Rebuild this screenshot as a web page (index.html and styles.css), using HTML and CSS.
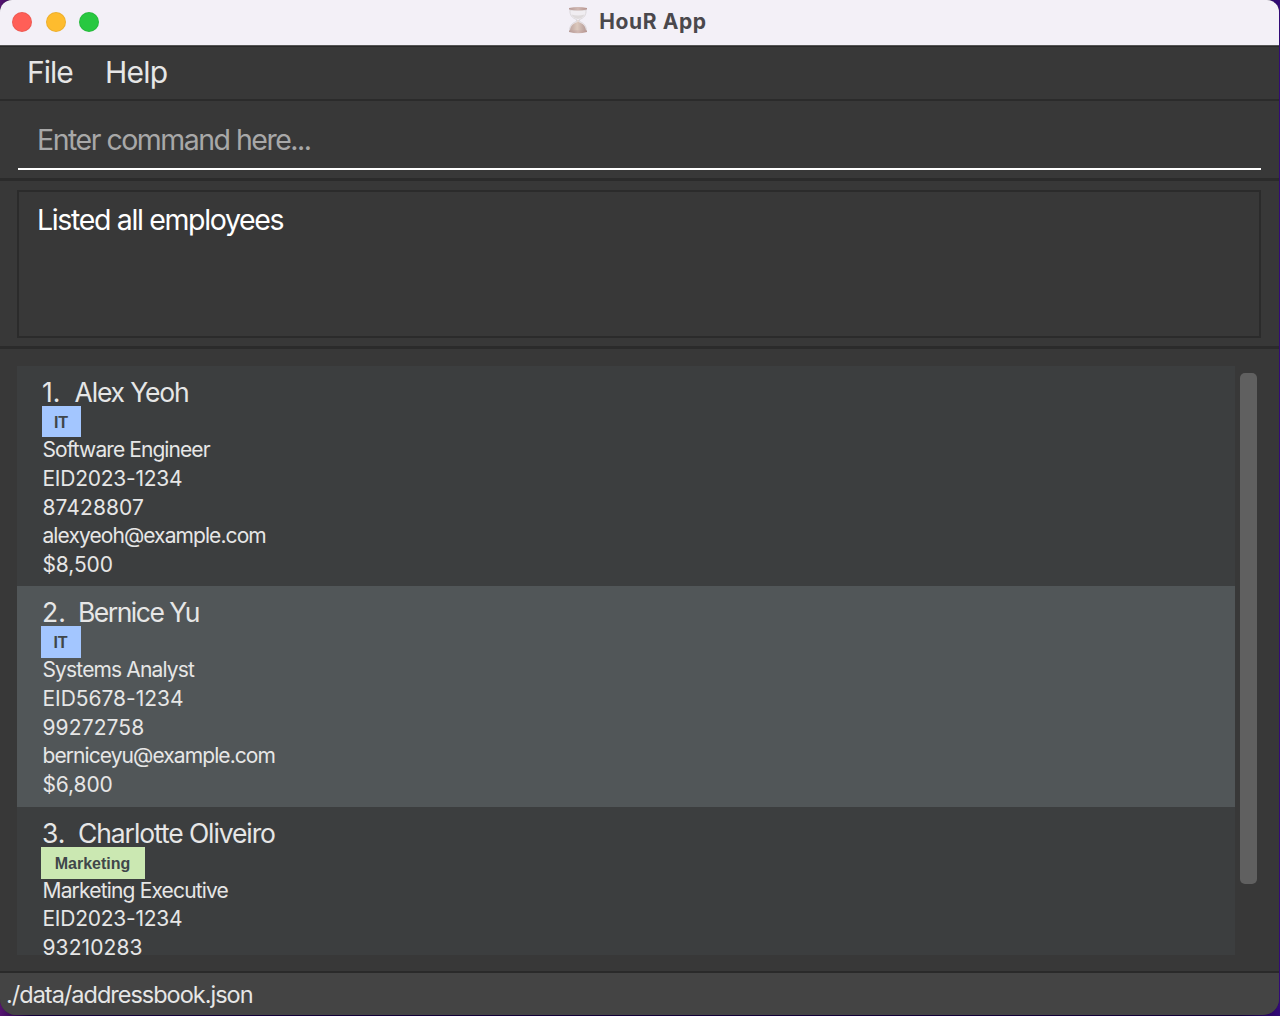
FILE: index.html
```html
<!DOCTYPE html>
<html lang="en">
<head>
<meta charset="utf-8">
<title>HouR App</title>
<link rel="stylesheet" href="styles.css">
</head>
<body>
<div class="window">
  <header class="titlebar">
    <div class="lights"><i class="light red"></i><i class="light yellow"></i><i class="light green"></i></div>
    <div class="title">
      <svg class="hourglass" width="20" height="28" viewBox="0 0 20 28">
        <defs>
          <linearGradient id="cap" x1="0" x2="1"><stop offset="0" stop-color="#b79a96"/><stop offset=".5" stop-color="#d0b8b2"/><stop offset="1" stop-color="#b6948f"/></linearGradient>
          <linearGradient id="sand" x1="0" x2="1"><stop offset="0" stop-color="#bfa6a1"/><stop offset=".45" stop-color="#dcc9bd"/><stop offset="1" stop-color="#b59c99"/></linearGradient>
        </defs>
        <path d="M2 4C1.500 9 4 12 8.500 13.500V15.500C4 17 1.500 20 1.500 25H18.500C18.500 20 16 17 11.500 15.500V13.500C16 12 18.500 9 18 4Z" fill="#f0edf1" stroke="#d6d2d6" stroke-width=".8"/>
        <path d="M3.500 8.500C5 11.500 7.500 12.500 10 13C12.500 12.500 15 11.500 16.500 8.500Q10 10.500 3.500 8.500Z" fill="#dedadb"/>
        <path d="M9.500 14H10.500V16C14.500 17 18 20 18 25H2C2 20 5.500 17 9.500 16Z" fill="url(#sand)"/>
        <path d="M1 2Q10 -.2 19 2V3.500Q10 5.500 1 3.500Z" fill="url(#cap)"/>
        <path d="M1 24.500Q10 24 19 24.500V26Q10 28.500 1 26Z" fill="url(#cap)"/>
      </svg>
      <span>HouR App</span>
    </div>
  </header>
  <nav class="menu"><span class="file">File</span><span class="help">Help</span></nav>
  <section class="command"><div class="field">Enter command here...</div></section>
  <section class="result"><div class="display">Listed all employees</div></section>
  <main class="people">
    <div class="list">
      <article class="person">
        <h2><span class="idx one">1.</span><span class="n1">Alex Yeoh</span></h2>
        <b class="tag it">IT</b>
        <p class="d1">Software Engineer</p><p class="eid">EID2023-1234</p><p class="num">87428807</p><p class="mail">alexyeoh@example.com</p><p class="pay">$8,500</p>
      </article>
      <article class="person alt">
        <h2><span class="idx">2.</span><span class="n2">Bernice Yu</span></h2>
        <b class="tag it wide">IT</b>
        <p class="d2">Systems Analyst</p><p class="eid eid2">EID5678-1234</p><p class="num">99272758</p><p class="mail">berniceyu@example.com</p><p class="pay">$6,800</p>
      </article>
      <article class="person last">
        <h2><span class="idx">3.</span><span class="n3">Charlotte Oliveiro</span></h2>
        <b class="tag marketing">Marketing</b>
        <p class="d3">Marketing Executive</p><p class="eid">EID2023-1234</p><p class="num">93210283</p>
      </article>
    </div>
    <div class="scroll"><div class="thumb"></div></div>
  </main>
  <footer class="status"><span>./data/addressbook.json</span></footer>
</div>
</body>
</html>
```
FILE: styles.css
```css
* { box-sizing: border-box; }
body {
  margin: 0; width: 1280px; height: 1016px; overflow: hidden;
  background: linear-gradient(90deg, #551470 0, #120038 30px, #120038 1240px, #330a78 1280px);
  font-family: Inter, "Liberation Sans", sans-serif; color: #e6e6e6;
}
.window {
  width: 1279px; height: 1015px; border-radius: 12px 12px 16px 16px; overflow: hidden;
  display: flex; flex-direction: column; background: #383838;
}
.titlebar {
  height: 46px; flex: none; background: #f3f0f7; border-bottom: 1px solid #555;
  display: grid; grid-template-columns: 1fr auto 1fr; align-items: center; padding: 0 16px 2px 12px;
}
.lights { display: flex; gap: 13.500px; }
.light { width: 20px; height: 20px; border-radius: 50%; border: 1px solid #0001; }
.red { background: #ff5f57; }
.yellow { background: #febc2e; }
.green { background: #28c840; }
.title { display: flex; align-items: center; gap: 11px; color: #4a484c; font-size: 21px; font-weight: 700; line-height: 28px; letter-spacing: .6px; }
.hourglass { margin-bottom: 3px; }
.menu { height: 55px; flex: none; border-top: 1px solid #292929; border-bottom: 2px solid #2b2b2b; padding: 0 27px 2px; display: flex; align-items: center; font-size: 30px; }
.file { width: 78px; letter-spacing: -1px; }
.help { letter-spacing: -.8px; }
.command { height: 80px; flex: none; padding: 9px 18px; border-bottom: 3px solid #2b2b2b; }
.field { height: 60px; border-bottom: 2px solid #fff; padding: 0 19px; font-size: 28.5px; line-height: 60px; letter-spacing: -1.5px; color: #a8a8a8; }
.result { height: 168px; flex: none; padding: 9px 18px 9px 17px; border-bottom: 3px solid #2b2b2b; }
.display { height: 148px; border: 2px solid #2b2b2b; padding: 9px 18px; font-size: 28.5px; line-height: 38px; letter-spacing: -1.35px; color: #fff; }
.people { height: 622px; flex: none; display: flex; padding: 17px 0 16px 17px; }
.list { width: 1218.400px; height: 589px; overflow: hidden; background: #3c3e3f; }
.person { height: 220.300px; padding: 9px 25px; background: #3c3e3f; }
.person.alt { background: #515658; }
.person.last { height: auto; padding-bottom: 0; }
h2 { margin: 0; height: 31px; font-size: 26.500px; line-height: 34px; font-weight: 400; display: flex; white-space: pre; }
.idx { width: 36px; }
.idx.one { width: 32.500px; }
.n1 { letter-spacing: -1.15px; }
.n2 { letter-spacing: -1.5px; }
.n3 { letter-spacing: -1.1px; }
.tag { display: flex; align-items: center; justify-content: center; width: 39px; height: 31px; padding-top: 2px; padding-right: 1px; font-family: "Liberation Sans", sans-serif; font-size: 16px; font-weight: 700; color: #40464a; }
.it { background: #a3c6ff; }
.wide { width: 40px; height: 32px; margin: 0 0 -1px -1px; }
.marketing { width: 104px; height: 32px; padding-top: 3px; margin: 0 0 -1px -1px; background: #cbe8b2; }
p { margin: 0; padding-left: .5px; height: 28.500px; font-size: 21px; line-height: 26.500px; white-space: nowrap; }
.d1, .mail { letter-spacing: -.92px; }
.d2 { letter-spacing: -.85px; }
.d3 { letter-spacing: -.83px; }
.eid { letter-spacing: -.25px; }
.eid2 { letter-spacing: -.03px; }
.num { letter-spacing: .1px; }
.pay { letter-spacing: -.1px; }
.num, .pay { line-height: 27.500px; }
.last .num { height: 27px; line-height: 26.500px; }
.scroll { padding: 7px 0 0 5px; }
.thumb { width: 17px; height: 511px; border-radius: 5px; background: #606060; }
.status { flex: 1; border-top: 2px solid #2a2a2a; background: #444; padding: 0 6px; font-size: 23.500px; line-height: 43px; letter-spacing: -1px; }
```
